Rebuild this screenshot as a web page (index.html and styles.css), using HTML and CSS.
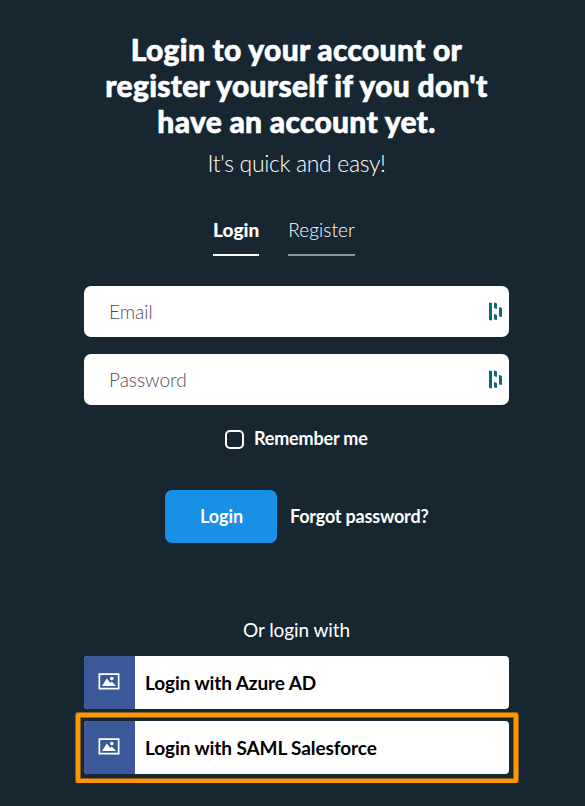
FILE: index.html
```html
<!DOCTYPE html>
<html lang="en">
<head>
<meta charset="utf-8">
<title>Login</title>
<link rel="stylesheet" href="styles.css">
</head>
<body>
<svg class="defs" width="0" height="0">
  <symbol id="manager" viewBox="0 0 14 19"><path d="M0 1l.6-.6L3 1v17l-.6.6L0 18zM5 1l.6-.6L8 1.500v5l-.6.5L5 6zM5 12.500l.6-.6L8 13v4.500l-.6.6L5 17.500zM10 5.500l.6-.6L13 6v8.500l-.6.6L10 14.500z"/></symbol>
  <symbol id="picture" viewBox="0 0 22 17"><path fill-rule="evenodd" d="M.5.3h21v16.200H.5zM2.200 2v12.800h17.600V2z"/><path d="M4 13l4.800-7.500L12.300 10l1.500-1.500L18 13z"/><circle cx="13.800" cy="5.500" r="1.800"/></symbol>
</svg>
<main class="page">
  <h1>Login to your account or<br>register yourself if you don't<br>have an account yet.</h1>
  <p class="subtitle">It's quick and easy!</p>
  <nav class="tabs"><a class="tab active">Login</a><a class="tab">Register</a></nav>
  <form class="form">
    <div class="field"><span>Email</span><svg><use href="#manager"/></svg></div>
    <div class="field"><span>Password</span><svg><use href="#manager"/></svg></div>
    <label class="remember"><span class="box"></span><span class="label">Remember me</span></label>
    <div class="actions"><button type="button">Login</button><a class="forgot">Forgot password?</a></div>
  </form>
  <p class="or">Or login with</p>
  <div class="provider"><span class="icon"><svg><use href="#picture"/></svg></span><span class="name">Login with Azure AD</span></div>
  <div class="highlight"><div class="provider"><span class="icon"><svg><use href="#picture"/></svg></span><span class="name">Login with SAML Salesforce</span></div></div>
</main>
</body>
</html>
```
FILE: styles.css
```css
* { box-sizing: border-box; }
body { margin: 0; background: #162732; color: #fff; font-family: Lato, sans-serif; }
.defs { display: block; }
.page { width: 425px; margin-left: 84px; padding-top: 31px; }
h1 { margin: 0; text-align: center; font-size: 30px; line-height: 36px; font-weight: 900; letter-spacing: .28px; -webkit-text-stroke: .6px #fff; white-space: nowrap; }
.subtitle { margin: 8px 0 0; text-align: center; font-size: 23px; line-height: 32px; font-weight: 300; letter-spacing: -.35px; }
.tabs { display: flex; gap: 29px; margin: 39px 0 0 129px; }
.tab { height: 38px; padding-bottom: 12px; line-height: 24px; font-size: 19px; font-weight: 300; letter-spacing: .08px; border-bottom: 2px solid #8b949a; }
.tab.active { font-weight: 900; letter-spacing: 0; border-color: #fff; }
.form { margin-top: 30px; }
.field { display: flex; align-items: center; justify-content: space-between; height: 51px; margin-bottom: 17px; padding: 0 6px 0 25px; border-radius: 7px; background: #fff; color: #4d5152; font-size: 19px; font-weight: 300; }
.field svg { width: 14px; height: 19px; fill: #12667a; }
.remember { display: flex; align-items: center; margin: 22px 0 0 141px; gap: 10px; height: 24px; font-size: 18px; font-weight: 700; letter-spacing: -.18px; }
.label { padding-bottom: 2px; }
.box { width: 19px; height: 19px; border: 2px solid #fff; border-radius: 5px; }
.actions { display: flex; align-items: center; gap: 13px; margin: 39px 0 0 81px; font-size: 18px; font-weight: 700; letter-spacing: -.2px; }
.forgot { padding-bottom: 2px; }
button { width: 112px; height: 53px; padding: 0 0 2px 1px; border: 0; border-radius: 7px; background: #1890e8; color: #fff; font: inherit; letter-spacing: -.1px; }
.or { margin: 75px 0 14px; text-align: center; font-size: 19px; line-height: 24px; letter-spacing: -.08px; }
.provider { display: flex; height: 53px; overflow: hidden; border-radius: 4px; background: #fff; color: #000; font-size: 19px; font-weight: 700; letter-spacing: -.1px; }
.icon { display: flex; align-items: center; justify-content: center; width: 51px; padding: 0 1px 2px 0; background: #3b5998; }
.icon svg { width: 22px; height: 17px; fill: #fff; }
.name { padding-left: 10px; line-height: 54px; }
.highlight { margin: 4px -9px 0 -8px; padding: 4px 5px 5px 4px; border: 4px solid #ff9800; border-radius: 2px; box-shadow: 0 0 0 1px #89601f, inset 0 0 0 1px #89601f; }
```
